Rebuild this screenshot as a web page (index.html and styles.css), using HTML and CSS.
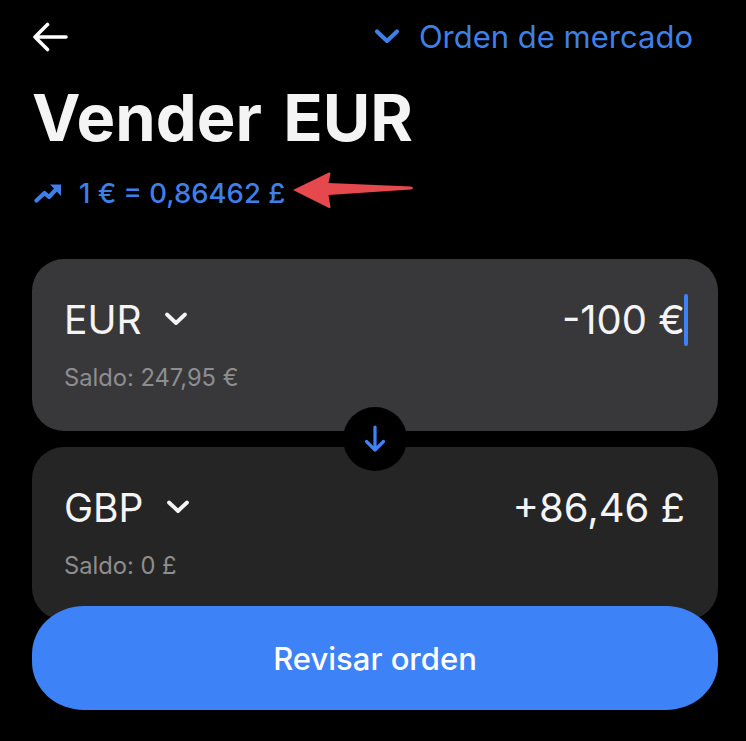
FILE: index.html
```html
<!DOCTYPE html>
<html lang="es">
<head>
<meta charset="utf-8">
<title>Vender EUR</title>
<link rel="stylesheet" href="styles.css">
</head>
<body>
<main class="screen">
  <header class="topbar">
    <svg class="back" viewBox="0 0 36 32" width="36" height="32"><path d="M34 17H3M15.500 4.500 3 17l12.500 12.500" fill="none" stroke="#fff" stroke-width="3.600" stroke-linecap="round" stroke-linejoin="round"/></svg>
    <div class="order-type">
      <svg class="chev-blue" viewBox="0 0 26 16" width="26" height="16"><path d="M3 3.500 13 13 23 3.500" fill="none" stroke="#3f7fe8" stroke-width="4.200" stroke-linecap="round" stroke-linejoin="round"/></svg>
      <span>Orden de mercado</span>
    </div>
  </header>
  <h1 class="title">Vender EUR</h1>
  <div class="rate">
    <svg class="trend" viewBox="0 0 28 20" width="28" height="20"><path d="M2.500 17.500 10.500 10l4.500 4 7-7.500" fill="none" stroke="#3f7fe8" stroke-width="4.200" stroke-linecap="round" stroke-linejoin="round"/><path d="M16 1.500h11V13z" fill="#3f7fe8"/></svg>
    <span>1 € = 0,86462 £</span>
    <svg class="red-arrow" viewBox="0 0 122 38" width="122" height="38"><path d="M1 19 37 1.500q1.500-.5 1.500 1L36.500 12 119 15.500q2 .5 2 1.500t-2 1.500L36.500 24l2 12q0 1.500-1.500 1z" fill="#e5484d"/></svg>
  </div>
  <section class="cards">
    <div class="card card-from">
      <div class="row">
        <div class="cur"><span>EUR</span><svg viewBox="0 0 24 16" width="24" height="16"><path d="M3 3.500 12 12l9-8.500" fill="none" stroke="#f4f4f4" stroke-width="3.800" stroke-linecap="round" stroke-linejoin="round"/></svg></div>
        <div class="amount">-100 €<i class="caret"></i></div>
      </div>
      <div class="balance">Saldo: 247,95 €</div>
    </div>
    <div class="card card-to">
      <div class="row">
        <div class="cur"><span>GBP</span><svg viewBox="0 0 24 16" width="24" height="16"><path d="M3 3.500 12 12l9-8.500" fill="none" stroke="#f4f4f4" stroke-width="3.800" stroke-linecap="round" stroke-linejoin="round"/></svg></div>
        <div class="amount">+86,46 £</div>
      </div>
      <div class="balance">Saldo: 0 £</div>
    </div>
    <div class="swap"><svg viewBox="0 0 24 30" width="24" height="30"><path d="M12 3v23M3.500 17.500 12 26l8.500-8.500" fill="none" stroke="#3f82f5" stroke-width="3.200" stroke-linecap="round" stroke-linejoin="round"/></svg></div>
  </section>
  <button class="review">Revisar orden</button>
</main>
</body>
</html>
```

FILE: styles.css
```css
* { box-sizing: border-box; }
html, body { margin: 0; background: #000; }
body { font-family: Inter, "Liberation Sans", sans-serif; overflow: hidden; }
.screen { width: 746px; height: 741px; padding: 12px 28px 0 32px; }
.topbar { display: flex; justify-content: space-between; align-items: center; height: 48px; padding-right: 25px; }
.order-type { display: flex; align-items: center; gap: 19px; color: #3f7fe8; font-size: 31px; }
.title { margin: 22px 0 0; color: #f4f4f4; font-size: 65px; line-height: 72px; font-weight: 700; word-spacing: 6px; }
.rate { position: relative; display: flex; align-items: center; gap: 17px; margin: 24px 0 0 2px; color: #3f7fe8; font-size: 27.500px; font-weight: 500; line-height: 30px; height: 30px; }
.red-arrow { position: absolute; left: 258px; top: -7px; }
.cards { position: relative; display: flex; flex-direction: column; gap: 16px; margin-top: 51px; width: 686px; }
.card { height: 172px; border-radius: 32px; padding: 37px 33px 0 32px; }
.card-from { background: #38383a; }
.card-to { background: #252525; height: 173px; }
.row { display: flex; justify-content: space-between; align-items: center; height: 46px; color: #f4f4f4; font-size: 40px; }
.cur { display: flex; align-items: center; gap: 22px; font-size: 39px; }
.amount { position: relative; }
.caret { position: absolute; right: -3px; top: -1px; width: 4px; height: 52px; border-radius: 2px; background: #3f82f5; }
.balance { margin-top: 21px; color: #8e8e90; font-size: 23.700px; line-height: 30px; }
.swap { position: absolute; left: 311px; top: 148px; width: 64px; height: 64px; border-radius: 50%; background: #000; display: flex; align-items: center; justify-content: center; }
.review { position: relative; display: block; width: 686px; height: 104px; margin-top: -14px; border: 0; border-radius: 52px / 48px; background: #3e82f7; color: #fff; font: 500 31px Inter, "Liberation Sans", sans-serif; }
```
